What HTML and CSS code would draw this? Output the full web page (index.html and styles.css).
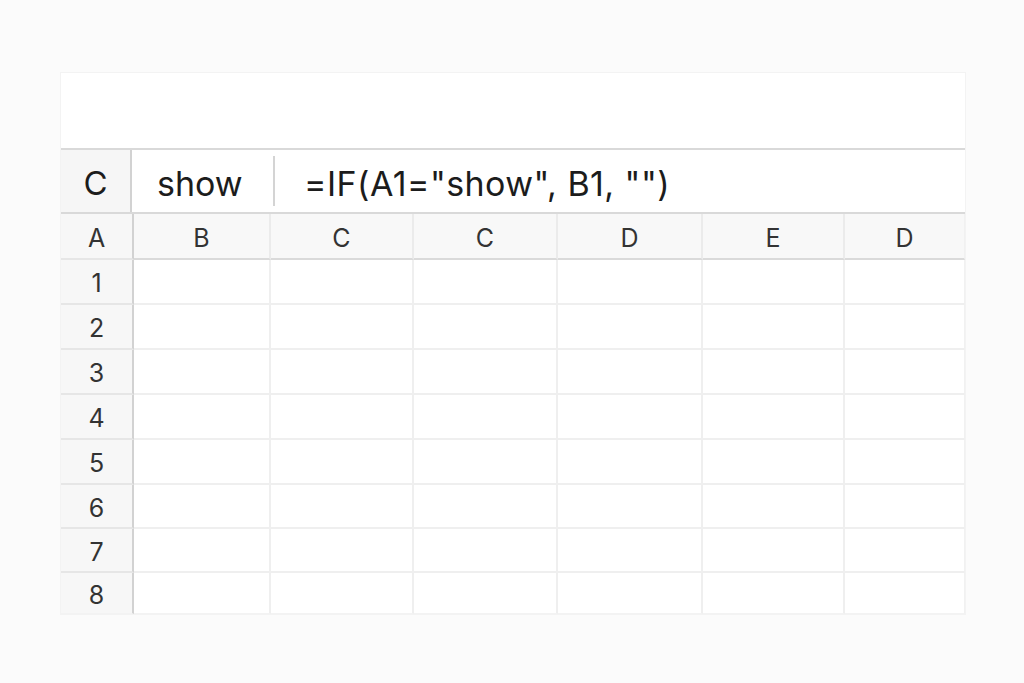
FILE: index.html
```html
<!DOCTYPE html>
<html>
<head>
<meta charset="utf-8">
<link rel="stylesheet" href="styles.css">
</head>
<body>
<div class="card">
  <div class="topbar"></div>
  <div class="fbar">
    <div class="namebox">C</div>
    <div class="cellval"><span>show</span><i class="sep"></i></div>
    <div class="formula">=IF(A1="show", B1, "")</div>
  </div>
  <div class="grid">
    <div class="hd rh">A</div><div class="hd">B</div><div class="hd">C</div><div class="hd">C</div><div class="hd">D</div><div class="hd">E</div><div class="hd last">D</div>
    <div class="rh">1</div><div class="c"></div><div class="c"></div><div class="c"></div><div class="c"></div><div class="c"></div><div class="c last"></div>
    <div class="rh">2</div><div class="c"></div><div class="c"></div><div class="c"></div><div class="c"></div><div class="c"></div><div class="c last"></div>
    <div class="rh">3</div><div class="c"></div><div class="c"></div><div class="c"></div><div class="c"></div><div class="c"></div><div class="c last"></div>
    <div class="rh">4</div><div class="c"></div><div class="c"></div><div class="c"></div><div class="c"></div><div class="c"></div><div class="c last"></div>
    <div class="rh">5</div><div class="c"></div><div class="c"></div><div class="c"></div><div class="c"></div><div class="c"></div><div class="c last"></div>
    <div class="rh">6</div><div class="c"></div><div class="c"></div><div class="c"></div><div class="c"></div><div class="c"></div><div class="c last"></div>
    <div class="rh">7</div><div class="c"></div><div class="c"></div><div class="c"></div><div class="c"></div><div class="c"></div><div class="c last"></div>
    <div class="rh bot">8</div><div class="c bot"></div><div class="c bot"></div><div class="c bot"></div><div class="c bot"></div><div class="c bot"></div><div class="c last bot"></div>
  </div>
</div>
</body>
</html>
```
FILE: styles.css
```css
html, body { margin: 0; padding: 0; }
body {
  background: #fbfbfb;
  width: 1024px;
  height: 683px;
  overflow: hidden;
  font-family: Inter, "Liberation Sans", sans-serif;
  color: #1c1c1c;
  padding-top: 73px;
  padding-left: 61px;
  box-sizing: border-box;
}
.card {
  width: 904px;
  background: #ffffff;
  box-shadow: 0 0 0 1px #f3f3f3;
}
.topbar {
  height: 75px;
  border-bottom: 2px solid #d9d9d9;
}
.fbar {
  display: flex;
  height: 62px;
  border-bottom: 2px solid #d9d9d9;
}
.namebox {
  width: 71px;
  background: #f6f6f6;
  border-right: 2px solid #d2d2d2;
  display: flex;
  align-items: center;
  justify-content: center;
  font-size: 33px;
  padding-top: 4px;
  box-sizing: border-box;
}
.cellval {
  width: 143px;
  display: flex;
  align-items: center;
  justify-content: space-between;
  font-size: 34px;
  padding-left: 25px;
  box-sizing: border-box;
}
.cellval span { padding-top: 4px; }
.sep {
  width: 2px;
  height: 50px;
  background: #d4d4d4;
}
.formula {
  display: flex;
  align-items: center;
  padding-left: 29px;
  padding-top: 4px;
  font-size: 34px;
  letter-spacing: 0.45px;
}
.grid {
  display: grid;
  grid-template-columns: 73px 137px 143px 144px 145px 142px 120px;
  grid-template-rows: 46px 45px 45px 45px 45px 45px 44px 44px 41px;
}
.grid > div {
  box-sizing: border-box;
  display: flex;
  align-items: center;
  justify-content: center;
  font-size: 25px;
  color: #333333;
  padding-top: 3px;
}
.hd {
  background: #f8f8f8;
  border-bottom: 2px solid #dadada;
  border-right: 2px solid #ebebeb;
}
.rh {
  background: #f7f7f7;
  border-right: 2px solid #d2d2d2 !important;
  border-bottom: 2px solid #e6e6e6;
}
.c {
  border-right: 2px solid #efefef;
  border-bottom: 2px solid #efefef;
}
.grid > .last { border-right: 1px solid #f1f1f1; }
.grid > .bot { border-bottom: 1px solid #f3f3f3; }
```
